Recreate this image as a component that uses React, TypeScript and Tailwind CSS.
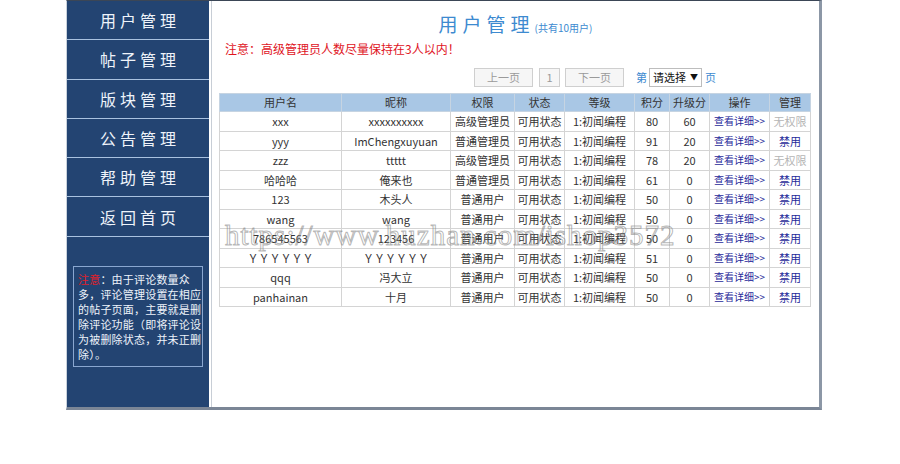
import React from "react";

const menu = ["用户管理", "帖子管理", "版块管理", "公告管理", "帮助管理", "返回首页"];

type Row = [string, string, string, string, string, string, boolean];
const rows: Row[] = [
  ["xxx", "xxxxxxxxxx", "高级管理员", "1:初闻编程", "80", "60", false],
  ["yyy", "ImChengxuyuan", "普通管理员", "1:初闻编程", "91", "20", true],
  ["zzz", "ttttt", "高级管理员", "1:初闻编程", "78", "20", false],
  ["哈哈哈", "俺来也", "普通管理员", "1:初闻编程", "61", "0", true],
  ["123", "木头人", "普通用户", "1:初闻编程", "50", "0", true],
  ["wang", "wang", "普通用户", "1:初闻编程", "50", "0", true],
  ["786545563", "123456", "普通用户", "1:初闻编程", "50", "0", true],
  ["ＹＹＹＹＹＹ", "ＹＹＹＹＹＹ", "普通用户", "1:初闻编程", "51", "0", true],
  ["qqq", "冯大立", "普通用户", "1:初闻编程", "50", "0", true],
  ["panhainan", "十月", "普通用户", "1:初闻编程", "50", "0", true],
];

const font = "font-['Noto_Sans_CJK_SC',sans-serif]";

export default function App() {
  return (
    <div className={`w-[900px] h-[464px] bg-white relative ${font}`}>
      <div className="ml-[66px] w-[756px] h-[410px] flex border-t border-t-[#3b4656] border-l border-l-[#c9d2dc] border-r-[3px] border-r-[#8c97a6] border-b-[3px] border-b-[#7b8696]">
        {/* Sidebar */}
        <div className="w-[142px] bg-[#234472] flex flex-col shrink-0">
          {menu.map((m) => (
            <div
              key={m}
              className="h-[39.3px] border-b border-b-[#a9c2e0] flex items-center justify-center text-[16px] text-[#eef3fa] tracking-[4px] pl-[4px]"
            >
              {m}
            </div>
          ))}
          <div className="mt-[29px] mx-[6px] h-[101px] border border-[#8aa7d0] px-[4px] py-[5px] text-[11px] leading-[15px] text-[#eef3fa] tracking-[0.2px] whitespace-nowrap">
            <div>
              <span className="text-[#e2202a]">注意</span>：由于评论数量众
            </div>
            <div>多，评论管理设置在相应</div>
            <div>的帖子页面，主要就是删</div>
            <div>除评论功能（即将评论设</div>
            <div>为被删除状态，并未正删</div>
            <div>除）。</div>
          </div>
        </div>
        {/* Content */}
        <div className="flex-1 ml-[2px] border-l border-l-[#c8ced6] bg-white flex flex-col">
          <div className="h-[37px] flex items-end justify-center pb-[5px] text-[#3d8ad0]">
            <span className="text-[19px] tracking-[5px] leading-none">用户管理</span>
            <span className="text-[10px] leading-none">(共有10用户)</span>
          </div>
          <div className="mt-[4px] pl-[13px] h-[13px] flex items-center text-[12px] text-[#e0141e]">
            注意：高级管理员人数尽量保持在3人以内！
          </div>
          <div className="mt-[12px] flex items-center h-[20px] pl-[262px] text-[11px]">
            <div className="w-[59px] h-[19px] border border-[#cfcfcf] bg-[#f6f6f6] text-[#9a9a9a] flex items-center justify-center">上一页</div>
            <div className="ml-[6px] w-[21px] h-[19px] border border-[#cfcfcf] bg-[#f6f6f6] text-[#9a9a9a] flex items-center justify-center">1</div>
            <div className="ml-[5px] w-[59px] h-[19px] border border-[#cfcfcf] bg-[#f6f6f6] text-[#9a9a9a] flex items-center justify-center">下一页</div>
            <span className="ml-[12px] text-[#3d8ad0]">第</span>
            <div className="ml-[2px] w-[53px] h-[19px] border border-[#bdbdbd] bg-white text-[#111] flex items-center justify-between px-[3px]">
              <span>请选择</span>
              <span className="text-[8px]">▼</span>
            </div>
            <span className="ml-[3px] text-[#3d8ad0]">页</span>
          </div>
          <table className="mt-[6px] ml-[7px] w-[591px] border-collapse text-[11px] text-[#333] text-center table-fixed">
            <colgroup>
              <col className="w-[122px]" />
              <col className="w-[109px]" />
              <col className="w-[64px]" />
              <col className="w-[50px]" />
              <col className="w-[70px]" />
              <col className="w-[35px]" />
              <col className="w-[40px]" />
              <col className="w-[60px]" />
              <col className="w-[41px]" />
            </colgroup>
            <thead>
              <tr className="h-[18px] bg-[#a9c7e5]">
                {["用户名", "昵称", "权限", "状态", "等级", "积分", "升级分", "操作", "管理"].map((h) => (
                  <th key={h} className="font-normal border border-[#c6d4e2] p-0 leading-[17px]">{h}</th>
                ))}
              </tr>
            </thead>
            <tbody>
              {rows.map((r, i) => (
                <tr key={i} className="h-[19.5px]">
                  <td className="border border-[#d4d4d4] p-0 leading-[18px]">{r[0]}</td>
                  <td className="border border-[#d4d4d4] p-0 leading-[18px]">{r[1]}</td>
                  <td className="border border-[#d4d4d4] p-0 leading-[18px]">{r[2]}</td>
                  <td className="border border-[#d4d4d4] p-0 leading-[18px]">可用状态</td>
                  <td className="border border-[#d4d4d4] p-0 leading-[18px]">{r[3]}</td>
                  <td className="border border-[#d4d4d4] p-0 leading-[18px]">{r[4]}</td>
                  <td className="border border-[#d4d4d4] p-0 leading-[18px]">{r[5]}</td>
                  <td className="border border-[#d4d4d4] p-0 leading-[18px] text-[10px] text-[#1f2a9a]">查看详细&gt;&gt;</td>
                  <td className={`border border-[#d4d4d4] p-0 leading-[18px] ${r[6] ? "text-[#1f2a9a]" : "text-[#b5b5b5]"}`}>
                    {r[6] ? "禁用" : "无权限"}
                  </td>
                </tr>
              ))}
            </tbody>
          </table>
        </div>
      </div>
      {/* watermark */}
      <div className="absolute left-[225px] top-[218px] text-[29px] leading-[34px] tracking-[1px] font-['Liberation_Serif',serif] text-transparent [-webkit-text-stroke:1px_rgba(120,120,120,0.55)] pointer-events-none">
        https://www.huzhan.com/ishop3572
      </div>
    </div>
  );
}
